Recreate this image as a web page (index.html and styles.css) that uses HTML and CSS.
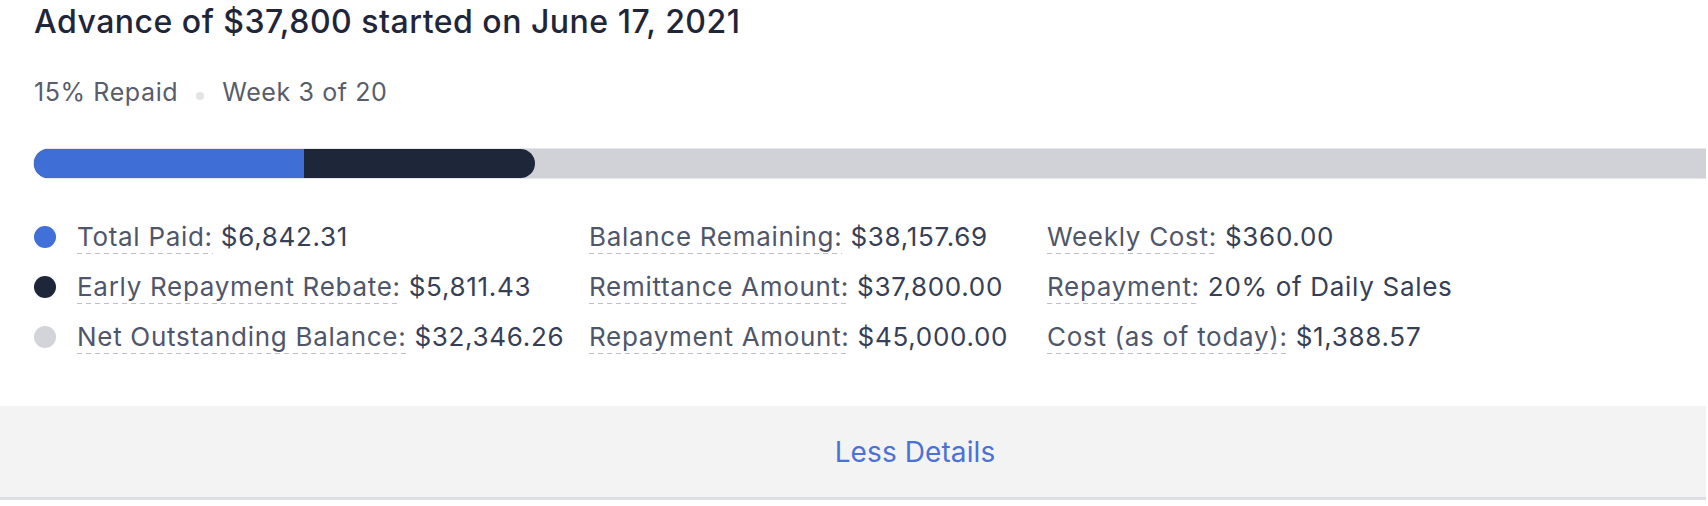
FILE: index.html
```html
<!DOCTYPE html>
<html lang="en">
<head>
<meta charset="utf-8">
<title>Advance</title>
<link rel="stylesheet" href="styles.css">
</head>
<body>
<div class="viewport">
  <div class="card">
    <div class="content">
      <h1 class="title">Advance of $37,800 started on June 17, 2021</h1>
      <div class="subtitle">
        <span>15% Repaid</span>
        <span class="sep"></span>
        <span>Week 3 of 20</span>
      </div>
      <div class="track">
        <div class="seg-dark" style="width: 501px"></div>
        <div class="seg-blue" style="width: 270px"></div>
      </div>
      <div class="legend">
        <div class="item"><span class="dot dot-blue"></span><span class="pair"><span class="label">Total Paid:</span> <span class="value">$6,842.31</span></span></div>
        <div class="item"><span class="pair"><span class="label">Balance Remaining:</span> <span class="value">$38,157.69</span></span></div>
        <div class="item"><span class="pair"><span class="label">Weekly Cost:</span> <span class="value">$360.00</span></span></div>

        <div class="item"><span class="dot dot-dark"></span><span class="pair"><span class="label">Early Repayment Rebate:</span> <span class="value">$5,811.43</span></span></div>
        <div class="item"><span class="pair"><span class="label">Remittance Amount:</span> <span class="value">$37,800.00</span></span></div>
        <div class="item"><span class="pair"><span class="label">Repayment:</span> <span class="value">20% of Daily Sales</span></span></div>

        <div class="item"><span class="dot dot-gray"></span><span class="pair"><span class="label">Net Outstanding Balance:</span> <span class="value">$32,346.26</span></span></div>
        <div class="item"><span class="pair"><span class="label">Repayment Amount:</span> <span class="value">$45,000.00</span></span></div>
        <div class="item"><span class="pair"><span class="label">Cost (as of today):</span> <span class="value">$1,388.57</span></span></div>
      </div>
    </div>
    <div class="footer">
      <a class="toggle" href="#">Less Details</a>
    </div>
  </div>
</div>
</body>
</html>
```

FILE: styles.css
```css
html, body {
  margin: 0;
  padding: 0;
  background: #ffffff;
}

body {
  font-family: Inter, "Noto Sans", sans-serif;
  overflow: hidden;
}

.viewport {
  width: 1706px;
  height: 506px;
  overflow: hidden;
}

.card {
  width: 1830px;
  background: #ffffff;
}

.content {
  padding: 2px 34px 0 34px;
}

.title {
  margin: 0;
  font-size: 32px;
  line-height: 40px;
  font-weight: 500;
  color: #1f2639;
  letter-spacing: 0.5px;
}

.subtitle {
  margin-top: 35px;
  display: flex;
  align-items: center;
  gap: 18px;
  font-size: 25px;
  line-height: 30px;
  color: #585d69;
  letter-spacing: 0.6px;
}

.sep {
  width: 8px;
  height: 8px;
  border-radius: 50%;
  background: #e2e3e6;
  margin-top: 8px;
}

.track {
  position: relative;
  margin-top: 42px;
  height: 29px;
  border-radius: 15px;
  background: #d1d2d7;
  box-shadow: 0 0 0 1px #e6e7ea;
}

.seg-dark {
  position: absolute;
  left: 0;
  top: 0;
  bottom: 0;
  background: #1e263a;
  border-radius: 15px;
}

.seg-blue {
  position: absolute;
  left: 0;
  top: 0;
  bottom: 0;
  background: #3f6fd6;
  border-radius: 15px 0 0 15px;
}

.legend {
  margin-top: 34px;
  display: grid;
  grid-template-columns: 555px 458px auto;
  grid-auto-rows: 50px;
  font-size: 26px;
  letter-spacing: 0.7px;
}

.item {
  display: flex;
  align-items: center;
  white-space: nowrap;
}

.pair {
  line-height: 50px;
}

.dot {
  width: 22px;
  height: 22px;
  border-radius: 50%;
  margin-right: 21px;
  flex: none;
}

.dot-blue { background: #4170d8; }
.dot-dark { background: #1e263a; }
.dot-gray { background: #d3d4d9; }

.label {
  color: #50566a;
  padding-bottom: 2px;
  background-image: repeating-linear-gradient(to right, #bcc0c9 0 5px, transparent 5px 9px);
  background-size: 100% 1px;
  background-position: left bottom;
  background-repeat: no-repeat;
}

.value {
  color: #363f55;
  margin-left: 0;
}

.footer {
  margin-top: 44px;
  height: 91px;
  background: #f3f3f3;
  border-bottom: 3px solid #dddee1;
  display: flex;
  align-items: center;
  justify-content: center;
}

.toggle {
  font-size: 28px;
  color: #4a72d6;
  text-decoration: none;
  letter-spacing: 0.1px;
}
```
